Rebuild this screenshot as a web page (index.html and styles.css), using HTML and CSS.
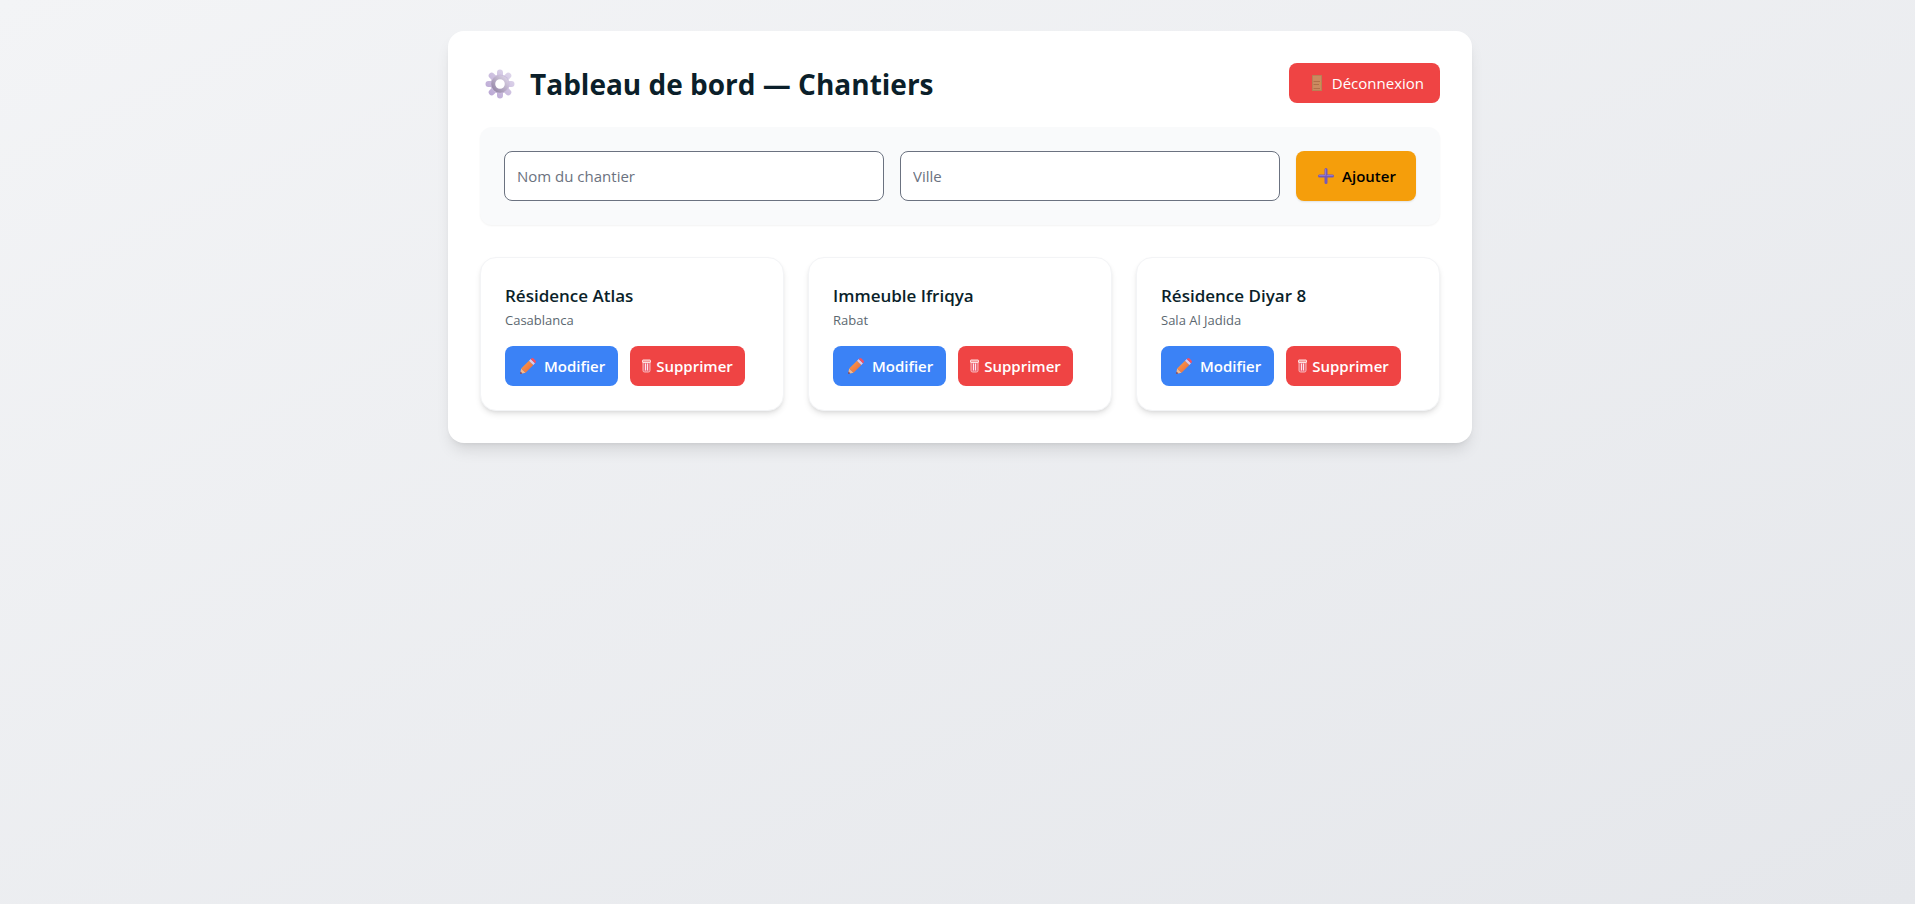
FILE: index.html
```html
<!DOCTYPE html>
<html lang="fr">
<head>
<meta charset="utf-8">
<meta name="viewport" content="width=device-width, initial-scale=1">
<title>Tableau de bord — Chantiers</title>
<link rel="stylesheet" href="styles.css">
</head>
<body>
<svg class="defs" width="0" height="0" aria-hidden="true">
  <defs>
    <linearGradient id="gear-fill" x1="1" y1="0" x2="0" y2="1">
      <stop offset="0" stop-color="#e0d8ec"/>
      <stop offset="1" stop-color="#b9a6d3"/>
    </linearGradient>
    <linearGradient id="ring-fill" x1="1" y1="0" x2="0" y2="1">
      <stop offset="0" stop-color="#dcd3e6"/>
      <stop offset="1" stop-color="#9486a6"/>
    </linearGradient>
    <linearGradient id="pencil-fill" x1="0" y1="0" x2="1" y2="1">
      <stop offset="0" stop-color="#ffa04d"/>
      <stop offset="1" stop-color="#e8663a"/>
    </linearGradient>
    <symbol id="icon-pencil" viewBox="0 0 16 16">
      <path d="M0 16 1.200 10.500 5.500 14.800Z" fill="#f6b98a"/>
      <path d="M0 16 .5 13.600 2.400 15.500Z" fill="#6b3d6b"/>
      <path d="M1.200 10.500 9 2.700 13.300 7 5.500 14.800Z" fill="url(#pencil-fill)"/>
      <path d="M9 2.700 10.700 1 15 5.300 13.300 7Z" fill="#dccbe8"/>
      <path d="M10.700 1 11.400.4Q12.500-.3 13.500.6L15.400 2.500Q16.300 3.500 15.600 4.600L15 5.300Z" fill="#fb4f5c"/>
    </symbol>
    <symbol id="icon-bin" viewBox="0 0 9 14">
      <path d="M1 3.500V11.500Q1 13 2.500 13H6.500Q8 13 8 11.500V3.500" fill="#ee6a78" stroke="#f9b9b9" stroke-width="1"/>
      <rect x=".5" y="1" width="8" height="2.500" rx=".5" fill="#f59a9a" stroke="#fde0e0" stroke-width="1"/>
      <path d="M3.500 4.500V11.500M5.500 4.500V11.500" stroke="#fde4ee" stroke-width="1"/>
    </symbol>
  </defs>
</svg>

<main class="panel">
  <header class="header">
    <h1 class="title">
      <svg class="gear" viewBox="0 0 30 30" aria-hidden="true">
        <g stroke="url(#gear-fill)" stroke-width="6" stroke-linecap="round">
          <path d="M15 3.500 15.010 26.500M3.500 15 26.500 15.010M6.700 6.700 23.300 23.310M23.300 6.700 6.700 23.310"/>
        </g>
        <circle cx="15" cy="15" r="9.500" fill="#c9bbdb"/>
        <circle cx="15" cy="15" r="6.800" fill="#fff" stroke="url(#ring-fill)" stroke-width="4"/>
      </svg>
      Tableau de bord — Chantiers
    </h1>
    <button class="btn btn-logout" type="button">
      <svg class="door" viewBox="0 0 10 16" aria-hidden="true">
        <rect width="10" height="16" rx="0.500" fill="#b98055"/>
        <rect x="1" y="1" width="8" height="14" fill="#cb8a60"/>
        <path d="M1.500 6.500H8M1.500 9.500H7M1.500 13.500H8" stroke="#b06f4a" stroke-width="1"/>
        <rect x="7.500" y="7.500" width="1.500" height="2" fill="#c79a45"/>
      </svg>
      Déconnexion
    </button>
  </header>

  <form class="add-form">
    <input class="field" type="text" name="nom" placeholder="Nom du chantier" aria-label="Nom du chantier">
    <input class="field" type="text" name="ville" placeholder="Ville" aria-label="Ville">
    <button class="btn btn-add" type="button">
      <svg class="plus" viewBox="0 0 16 16" aria-hidden="true">
        <path d="M8 1.500V14.500M1.500 8H14.500" stroke="#7659b8" stroke-width="3" stroke-linecap="round"/>
        <path d="M7.500 1.500V7.500H1.500M9 7.500H14.500" fill="none" stroke="#8f78cf" stroke-width="1" stroke-linecap="round"/>
      </svg>
      Ajouter
    </button>
  </form>

  <section class="cards" aria-label="Chantiers">
    <article class="card">
      <h2 class="card-title">Résidence Atlas</h2>
      <p class="card-city">Casablanca</p>
      <div class="actions">
        <button class="btn btn-edit" type="button"><svg class="pencil" aria-hidden="true"><use href="#icon-pencil"/></svg>Modifier</button>
        <button class="btn btn-delete" type="button"><svg class="bin" aria-hidden="true"><use href="#icon-bin"/></svg>Supprimer</button>
      </div>
    </article>
    <article class="card">
      <h2 class="card-title">Immeuble Ifriqya</h2>
      <p class="card-city">Rabat</p>
      <div class="actions">
        <button class="btn btn-edit" type="button"><svg class="pencil" aria-hidden="true"><use href="#icon-pencil"/></svg>Modifier</button>
        <button class="btn btn-delete" type="button"><svg class="bin" aria-hidden="true"><use href="#icon-bin"/></svg>Supprimer</button>
      </div>
    </article>
    <article class="card">
      <h2 class="card-title">Résidence Diyar 8</h2>
      <p class="card-city">Sala Al Jadida</p>
      <div class="actions">
        <button class="btn btn-edit" type="button"><svg class="pencil" aria-hidden="true"><use href="#icon-pencil"/></svg>Modifier</button>
        <button class="btn btn-delete" type="button"><svg class="bin" aria-hidden="true"><use href="#icon-bin"/></svg>Supprimer</button>
      </div>
    </article>
  </section>
</main>
</body>
</html>
```
FILE: styles.css
```css
*, *::before, *::after { box-sizing: border-box; }

body {
  margin: 0;
  min-height: 100vh;
  padding: 31px 24px 31px 29px;
  background: linear-gradient(to bottom right, #f3f4f6, #e5e7eb);
  color: #0b1f2a;
  font-family: "Segoe UI", "Open Sans", "Noto Sans", sans-serif;
  font-size: 15px;
  line-height: 24px;
}

h1, h2, p { margin: 0; }

.defs { position: absolute; }

.panel {
  max-width: 1024px;
  margin: 0 auto;
  padding: 32px;
  background: #fff;
  border-radius: 16px;
  box-shadow: 0 10px 15px -3px rgb(0 0 0 / 0.1), 0 4px 6px -4px rgb(0 0 0 / 0.1);
}

.header {
  display: flex;
  align-items: center;
  justify-content: space-between;
  gap: 16px;
  margin-bottom: 24px;
}

.title {
  display: flex;
  align-items: center;
  gap: 15px;
  padding: 2px 0 0 5px;
  font-size: 28px;
  font-weight: 700;
  line-height: 38px;
}

.gear { width: 30px; height: 30px; }

.btn {
  display: inline-flex;
  align-items: center;
  justify-content: center;
  min-height: 40px;
  padding: 8px 12px;
  border: 0;
  border-radius: 8px;
  color: #fff;
  font: inherit;
  font-weight: 600;
  white-space: nowrap;
  cursor: pointer;
}

.btn-logout {
  gap: 10px;
  padding: 8px 16px 8px 23px;
  background: #ef4444;
  font-weight: 400;
}

.door { width: 10px; height: 16px; }

.add-form {
  display: grid;
  grid-template-columns: 1fr 1fr 120px;
  gap: 16px;
  padding: 24px;
  margin-bottom: 32px;
  background: #f9fafb;
  border-radius: 12px;
  box-shadow: 0 1px 2px rgb(0 0 0 / 0.05);
}

.field {
  width: 100%;
  min-width: 0;
  height: 50px;
  padding: 12px;
  border: 1px solid #6b7280;
  border-radius: 8px;
  background: #fff;
  color: inherit;
  font: inherit;
}

.field::placeholder { color: #6b7280; opacity: 1; }

.btn-add {
  gap: 8px;
  padding: 8px 12px 8px 14px;
  background: #f59e0b;
  color: #000;
  box-shadow: 0 1px 2px rgb(0 0 0 / 0.1);
}

.plus { width: 16px; height: 16px; }

.cards {
  display: grid;
  grid-template-columns: repeat(3, 1fr);
  gap: 24px;
}

.card {
  padding: 24px;
  border: 1px solid #f3f4f6;
  border-radius: 16px;
  background: #fff;
  box-shadow: 0 4px 6px -1px rgb(0 0 0 / 0.1), 0 2px 4px -2px rgb(0 0 0 / 0.1);
}

.card-title {
  font-size: 17px;
  font-weight: 600;
  line-height: 28px;
}

.card-city {
  color: #5b6770;
  font-size: 13px;
  line-height: 20px;
}

.actions {
  display: flex;
  gap: 12px;
  margin-top: 16px;
}

.btn-edit { gap: 8px; padding-left: 15px; padding-right: 13px; background: #3b82f6; }

.btn-delete { gap: 5px; background: #ef4444; }

.pencil { width: 16px; height: 16px; }

.bin { width: 9px; height: 14px; }

@media (max-width: 900px) {
  .add-form, .cards { grid-template-columns: 1fr; }
}
```
